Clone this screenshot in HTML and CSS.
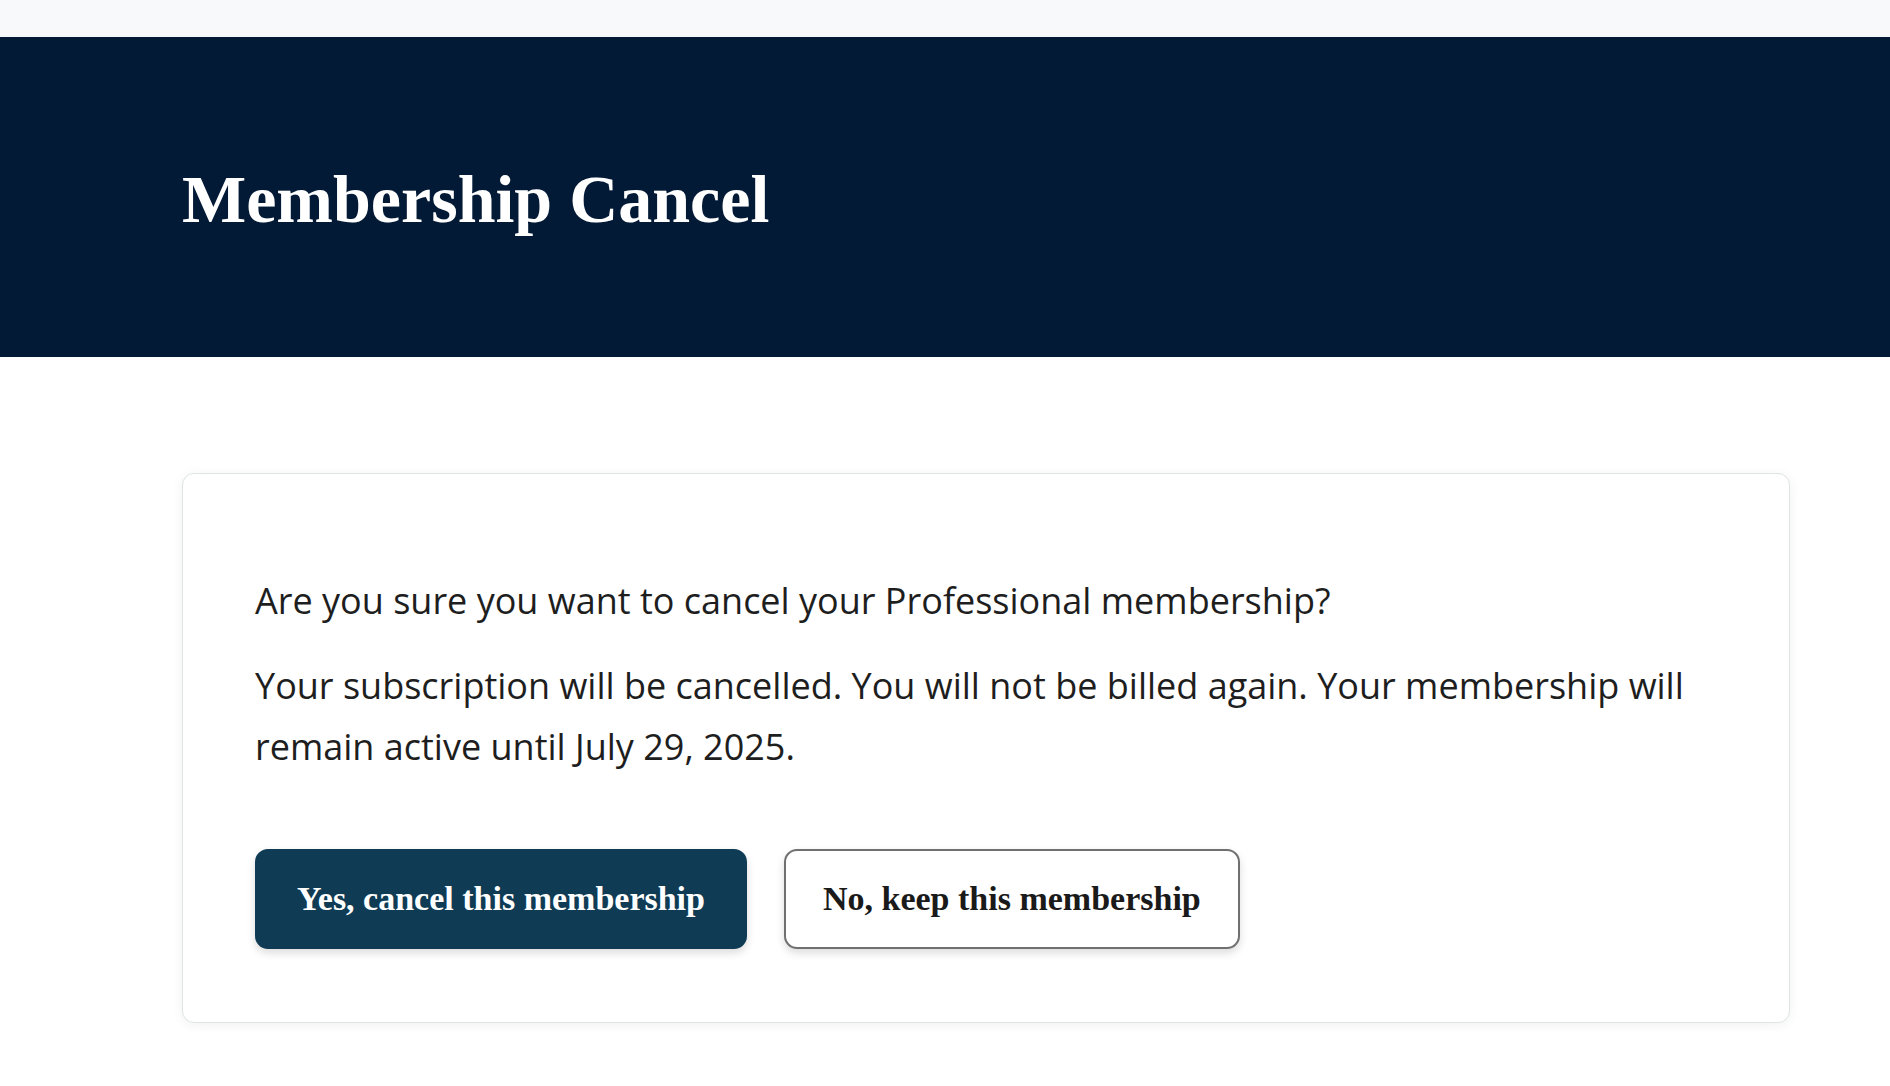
FILE: index.html
```html
<!DOCTYPE html>
<html lang="en">

<head>
    <meta charset="UTF-8">
    <meta name="viewport" content="width=device-width, initial-scale=1.0">
    <title>Membership Cancel</title>
    <link rel="stylesheet" href="styles.css">
</head>

<body>
    <div class="top-bar"></div>

    <header class="page-header">
        <h1>Membership Cancel</h1>
    </header>

    <main class="page-content">
        <div class="cancel-card">
            <p>Are you sure you want to cancel your Professional membership?</p>
            <p>Your subscription will be cancelled. You will not be billed again. Your membership will remain active until July 29, 2025.</p>
            <div class="cancel-actions">
                <button type="button" class="btn btn-primary">Yes, cancel this membership</button>
                <button type="button" class="btn btn-outline">No, keep this membership</button>
            </div>
        </div>
    </main>
</body>

</html>
```

FILE: styles.css
```css
body, html {
    margin: 0;
    padding: 0;
    background: #fff;
    font-family: 'Open Sans', 'Noto Sans', sans-serif;
    color: #1e1e1e;
}

.top-bar {
    height: 37px;
    background: #f8f9fa;
}

.page-header {
    background: #031a36;
    padding: 122px 0 116px 182px;
}

.page-header h1 {
    margin: 0;
    font-family: 'Liberation Serif', 'Times New Roman', serif;
    font-weight: bold;
    font-size: 68px;
    line-height: 1.2;
    color: #fff;
}

.page-content {
    padding: 116px 100px 64px 182px;
}

.cancel-card {
    background: #fff;
    border: 1px solid #dde5e4;
    border-radius: 12px;
    box-shadow: 0 2px 12px rgba(0, 0, 0, 0.06);
    padding: 72px 72px 73px;
}

.cancel-card p {
    margin: 24px 0 0;
    font-size: 36px;
    line-height: 1.72;
}

.cancel-card p + p {
    margin-top: 23px;
}

.cancel-actions {
    display: flex;
    gap: 37px;
    margin-top: 71px;
}

.btn {
    font-family: 'Liberation Serif', 'Times New Roman', serif;
    font-weight: bold;
    font-size: 34px;
    line-height: 1.2;
    padding: 28px 40px 27px;
    border-radius: 13px;
    border: 2px solid transparent;
    cursor: pointer;
    box-shadow: 0 4px 8px rgba(0, 0, 0, 0.14);
}

.btn-primary {
    background: #0f3b55;
    border-color: #0f3b55;
    color: #fff;
}

.btn-outline {
    padding-left: 37px;
    padding-right: 37px;
    background: #fff;
    border-color: #707070;
    color: #1a1a1a;
}
```
